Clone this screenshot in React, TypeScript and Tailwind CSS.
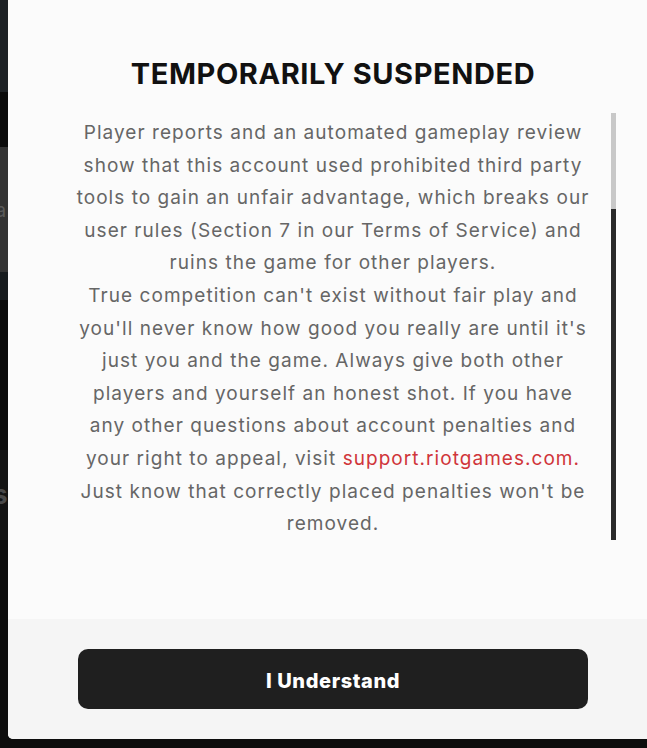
const bodyFont = { fontFamily: "Inter, 'Noto Sans', sans-serif" };

function BackdropStrip() {
  // sliver of the game client visible behind the modal
  return (
    <div className="w-[8px] shrink-0 flex flex-col overflow-hidden leading-none">
      <div className="h-[92px] bg-[#1e2225]" />
      <div className="h-[55px] bg-[#0b0b0b]" />
      <div className="h-[125px] bg-[#333333] flex items-center text-[#5a5a5a]">
        <span className="-ml-[5px] text-[20px]">a</span>
      </div>
      <div className="h-[28px] bg-[#171b1e]" />
      <div className="h-[150px] bg-[#0b0b0b]" />
      <div className="h-[90px] bg-[#141414] flex items-center text-[#4a4a4a]">
        <span className="-ml-[7px] font-bold text-[26px]">s</span>
      </div>
      <div className="flex-1 bg-[#0d0d0d]" />
    </div>
  );
}

export default function App() {
  return (
    <div className="w-full h-[748px] bg-[#0d0d0d] flex overflow-hidden" style={bodyFont}>
      <BackdropStrip />
      <div className="w-[650px] shrink-0 h-[739px] bg-[#fbfbfb] rounded-bl-[5px] flex flex-col relative overflow-hidden">
        <h1 className="pt-[55px] text-center text-[29px] leading-[37px] font-bold text-[#111111] tracking-[0.02em]">
          TEMPORARILY SUSPENDED
        </h1>

        {/* scroll area */}
        <div className="mt-[21px] h-[427px] relative">
          <p className="w-[520px] mx-auto pt-[4px] text-center text-[19px] leading-[32.6px] text-[#666666] tracking-[0.055em]">
            Player reports and an automated gameplay review show that this account used prohibited third party tools to gain an unfair advantage, which breaks our user rules (Section 7 in our Terms of Service) and ruins the game for other players.
            <br />
            True competition can't exist without fair play and you'll never know how good you really are until it's just you and the game. Always give both other players and yourself an honest shot. If you have any other questions about account penalties and your right to appeal, visit{" "}
            <a className="text-[#d0353a]">support.riotgames.com.</a> Just know that correctly placed penalties won't be removed.
          </p>
          <div className="absolute left-[603px] top-0 w-[5px] h-full flex flex-col">
            <div className="h-[96px] bg-[#c8c8c8]" />
            <div className="flex-1 bg-[#2a2a2a]" />
          </div>
        </div>

        <div className="mt-auto h-[120px] bg-[#f5f5f5] pt-[30px] flex justify-center">
          <button className="w-[510px] h-[60px] pt-[3px] rounded-[10px] bg-[#1f1f1f] text-white text-[20px] font-extrabold tracking-[0.03em]">
            I Understand
          </button>
        </div>
      </div>
    </div>
  );
}
